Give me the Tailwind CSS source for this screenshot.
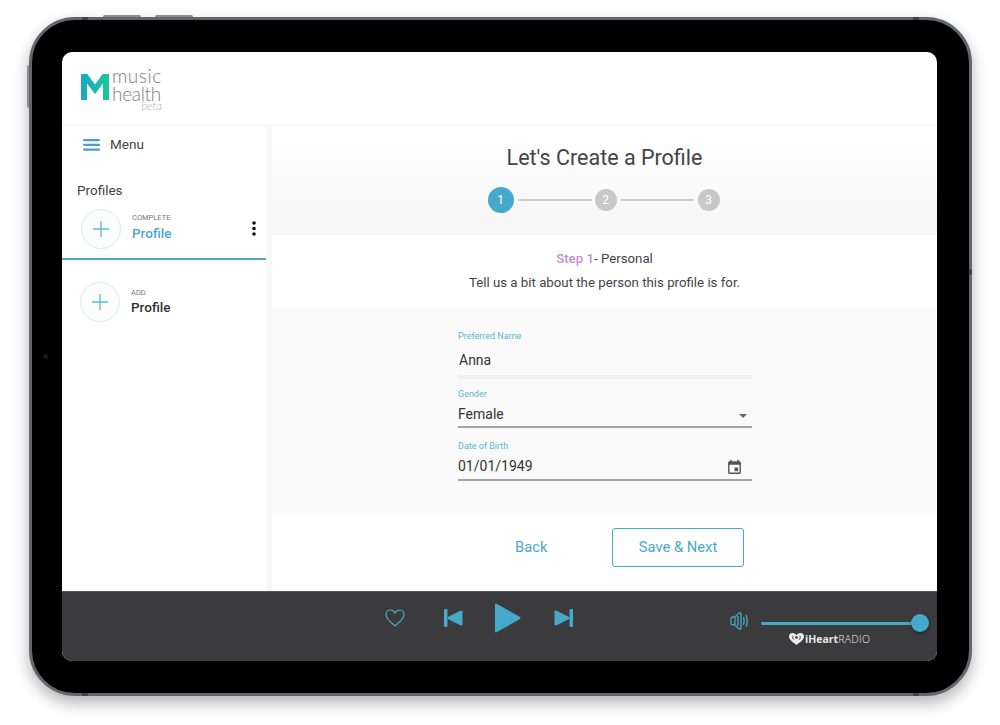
<!DOCTYPE html>
<html lang="en">
<head>
  <meta charset="UTF-8">
  <title>Music Health - Create Profile</title>
  <script src="https://cdn.jsdelivr.net/npm/@tailwindcss/browser@4"></script>
</head>
<body class="bg-white h-[725px] w-[1000px] overflow-hidden font-['Roboto',sans-serif]">
  <div class="pl-[29px] pt-[17px]">
    <!-- Tablet frame -->
    <div class="relative w-[943px] h-[679px] rounded-[46px] bg-black border-[3px] border-[#62676a] px-[30px] pt-[32px] shadow-[0_7px_16px_rgba(0,0,0,0.3)]">
      <div class="absolute -top-[5px] left-[71px] w-[38px] h-[2px] rounded-t-sm bg-[#8b8f91]"></div>
      <div class="absolute -top-[5px] left-[123px] w-[38px] h-[2px] rounded-t-sm bg-[#8b8f91]"></div>
      <div class="absolute top-[45px] -left-[5px] w-[2px] h-[43px] rounded-l-sm bg-[#8b8f91]"></div>
      <div class="absolute -top-[3px] left-[50px] w-[6px] h-[3px] bg-[#3f4345]"></div>
      <div class="absolute -top-[3px] right-[50px] w-[6px] h-[3px] bg-[#3f4345]"></div>
      <div class="absolute -bottom-[3px] left-[50px] w-[6px] h-[3px] bg-[#3f4345]"></div>
      <div class="absolute -bottom-[3px] right-[50px] w-[6px] h-[3px] bg-[#3f4345]"></div>
      <div class="absolute top-[249px] -right-[3px] w-[3px] h-[6px] bg-[#3f4345]"></div>
      <div class="absolute top-[334px] left-[11px] w-[5px] h-[5px] rounded-full bg-[#161a20]"></div>

      <!-- Screen -->
      <div class="w-[875px] h-[609px] rounded-[10px] overflow-hidden bg-white flex flex-col">
        <header class="h-[75px] shrink-0 border-b-[3px] border-[#f8f8f8] pl-[19px] pt-[16px] flex items-start">
          <svg width="28" height="26" viewBox="0 0 29 26" class="mt-[6px]" preserveAspectRatio="none">
            <defs>
              <linearGradient id="logoGrad" x1="0" y1="0" x2="1" y2="0">
                <stop offset="0" stop-color="#1aa7c4"/>
                <stop offset="1" stop-color="#1cc79a"/>
              </linearGradient>
            </defs>
            <path d="M0 0H6.500L14.500 10.500L22.500 0H29V26H22.800V9.500L14.500 20L6.200 9.500V26H0Z" fill="url(#logoGrad)"/>
          </svg>
          <div class="ml-[3px] -mt-[1px] w-[50px] flex flex-col font-['Lato',sans-serif] text-[#7d7d80]">
            <span class="text-[19px] font-light leading-[17px] tracking-[0.55px]">music</span>
            <span class="text-[19px] font-light leading-[17px] -tracking-[0.3px] mt-[1px] whitespace-nowrap">health</span>
            <span class="text-[11.500px] font-light leading-[10px] -mt-[1px] italic text-[#b0b0b0] self-end">beta</span>
          </div>
        </header>

        <div class="flex-1 flex min-h-0">
          <!-- Sidebar -->
          <aside class="w-[204px] shrink-0 bg-white flex flex-col">
            <div class="flex items-center pl-[21px] pt-[5px] pb-[5px] h-[25px] box-content">
              <svg width="17" height="12" viewBox="0 0 17 12" fill="#4a9fd0">
                <rect width="17" height="2.200" rx="1"/>
                <rect y="4.800" width="17" height="2.200" rx="1"/>
                <rect y="9.600" width="17" height="2.200" rx="1"/>
              </svg>
              <span class="ml-[10px] text-[13.500px] text-[#444]">Menu</span>
            </div>
            <div class="pl-[15px] mt-[19px] text-[13.500px] leading-[18px] text-[#444]">Profiles</div>
            <div class="relative h-[60px] mt-[1px] border-b-2 border-[#4aa9c9] pl-[19px] pt-[9px] flex items-start">
              <div class="w-[40px] h-[40px] rounded-full bg-[#fbfdfd] border border-[#d9ebef] flex items-center justify-center">
                <svg width="16" height="16" viewBox="0 0 16 16" stroke="#5db8d2" stroke-width="1.300"><path d="M8 0V16M0 8H16"/></svg>
              </div>
              <div class="ml-[11px] flex flex-col">
                <span class="text-[7.500px] leading-[10px] mt-[4px] text-[#777]">COMPLETE</span>
                <span class="text-[13.500px] leading-[18px] mt-[1px] font-medium text-[#4aa9c9]">Profile</span>
              </div>
              <svg class="absolute right-[10px] top-[21px]" width="4" height="15" viewBox="0 0 4 15" fill="#111">
                <circle cx="2" cy="2" r="1.800"/><circle cx="2" cy="7.500" r="1.800"/><circle cx="2" cy="13" r="1.800"/>
              </svg>
            </div>
            <div class="pl-[18px] mt-[22px] flex items-start">
              <div class="w-[40px] h-[40px] rounded-full bg-[#fbfdfd] border border-[#d9ebef] flex items-center justify-center">
                <svg width="16" height="16" viewBox="0 0 16 16" stroke="#5db8d2" stroke-width="1.300"><path d="M8 0V16M0 8H16"/></svg>
              </div>
              <div class="ml-[11px] flex flex-col">
                <span class="text-[7.500px] leading-[10px] mt-[6px] text-[#777]">ADD</span>
                <span class="text-[13.500px] leading-[18px] font-medium text-[#333]">Profile</span>
              </div>
            </div>
          </aside>

          <div class="w-[6px] shrink-0 bg-[#f8f8f8]"></div>

          <!-- Main -->
          <main class="flex-1 flex flex-col min-w-0">
            <section class="h-[108px] shrink-0 bg-gradient-to-b from-white to-[#f6f6f6] flex flex-col items-center">
              <h1 class="mt-[16px] text-[21.500px] leading-[30px] text-[#444]">Let's Create a Profile</h1>
              <div class="mt-[14px] mr-[2px] flex items-center">
                <span class="w-[26px] h-[26px] rounded-full bg-[#46a9cb] text-white text-[12px] flex items-center justify-center">1</span>
                <span class="w-[74px] h-[2px] ml-[4px] mr-[3px] bg-[#cdcdcd]"></span>
                <span class="w-[22px] h-[22px] rounded-full bg-[#c8c8c8] text-white text-[12px] flex items-center justify-center">2</span>
                <span class="w-[73px] h-[2px] mx-[4px] bg-[#cdcdcd]"></span>
                <span class="w-[22px] h-[22px] rounded-full bg-[#c8c8c8] text-white text-[12px] flex items-center justify-center">3</span>
              </div>
            </section>

            <section class="h-[72px] shrink-0 bg-white flex flex-col items-center text-[13.250px] text-[#444] pt-[14px]">
              <p class="leading-[20px]"><span class="font-medium text-[#c78fd0]">Step 1</span>- Personal</p>
              <p class="leading-[20px] mt-[4px]">Tell us a bit about the person this profile is for.</p>
            </section>

            <section class="h-[206px] shrink-0 bg-[#fafafa] pl-[186px]">
              <div class="w-[294px]">
                <label class="block pt-[23px] text-[9px] leading-[12px] text-[#5cb6d3]">Preferred Name</label>
                <div class="mt-[8px] pl-[1px] pb-[5px] text-[14px] leading-[20px] text-[#333] border-b-[4px] border-[#f1f1f1]">Anna</div>
                <label class="block mt-[9px] text-[9px] leading-[12px] text-[#5cb6d3]">Gender</label>
                <div class="mt-[2px] h-[26px] flex items-center justify-between text-[14px] text-[#333] border-b-2 border-[#a3a3a3]">
                  <span>Female</span>
                  <svg class="mr-[5px] mt-[3px]" width="8" height="4" viewBox="0 0 8 4" fill="#666"><path d="M0 0H8L4 4Z"/></svg>
                </div>
                <label class="block mt-[12px] text-[9px] leading-[12px] text-[#5cb6d3]">Date of Birth</label>
                <div class="mt-[2px] h-[27px] flex items-center justify-between text-[14px] text-[#333] border-b-2 border-[#a3a3a3]">
                  <span>01/01/1949</span>
                  <svg class="mr-[10px] -mt-[1px]" width="15" height="15" viewBox="3 1 18 21" fill="#555"><path d="M19 4h-1V2h-2v2H8V2H6v2H5c-1.100 0-2 .9-2 2v14c0 1.100.9 2 2 2h14c1.100 0 2-.9 2-2V6c0-1.100-.9-2-2-2zm0 16H5V9h14v11z"/><rect x="12" y="13" width="5" height="5"/></svg>
                </div>
              </div>
            </section>

            <section class="flex-1 bg-white flex items-start pl-[243px] pt-[15px]">
              <span class="w-[32px] mt-[10px] text-[14.750px] leading-[19px] text-[#4aa9c9] whitespace-nowrap">Back</span>
              <button class="ml-[65px] w-[132px] h-[39px] rounded-[3px] border border-[#4aa9c9] text-[14.750px] text-[#4aa9c9]">Save &amp; Next</button>
            </section>
          </main>
        </div>

        <!-- Player -->
        <footer class="relative h-[70px] shrink-0 bg-[#3b3b3d] border-t border-[#555] flex">
          <div class="w-[323px] shrink-0"></div>
          <div class="flex items-start pt-[11px]">
            <svg class="mt-[6px]" width="20" height="18" viewBox="0 0 20 18" fill="none" stroke="#46a9cb" stroke-width="1.200"><path d="M10 17C6 13.500 1 10 1 5.500C1 2.800 3 1 5.300 1C7.200 1 9 2 10 4C11 2 12.800 1 14.700 1C17 1 19 2.800 19 5.500C19 10 14 13.500 10 17Z"/></svg>
            <svg class="ml-[39px] mt-[6px]" width="19" height="18" viewBox="0 0 19 18" fill="#46a9cb"><rect x="0" y="0" width="3.500" height="18" rx="1"/><path d="M5 9L17 3V15Z" stroke="#46a9cb" stroke-width="3" stroke-linejoin="round"/></svg>
            <svg class="ml-[32px]" width="26" height="30" viewBox="0 0 26 30" fill="#46a9cb"><path d="M0 1.500Q0 0 1.500 .7L25 14Q26 15 25 16L1.500 29.300Q0 30 0 28.500Z"/></svg>
            <svg class="ml-[33px] mt-[6px]" width="19" height="18" viewBox="0 0 19 18" fill="#46a9cb"><rect x="15.500" y="0" width="3.500" height="18" rx="1"/><path d="M14 9L2 3V15Z" stroke="#46a9cb" stroke-width="3" stroke-linejoin="round"/></svg>
          </div>
          <svg class="absolute left-[668px] top-[19px]" width="19" height="20" viewBox="0 0 19 20" fill="none" stroke="#46a9cb" stroke-width="1.300">
            <rect x="1" y="6" width="4" height="8" rx="2"/><path d="M5 6L9 2Q11 1 11 4V16Q11 19 9 18L5 14"/><path d="M8 5V15"/><path d="M13.500 6Q15 10 13.500 14"/><path d="M16 4Q18.500 10 16 16"/>
          </svg>
          <div class="absolute left-[699px] top-[30px] w-[160px] h-[3px] rounded-full bg-[#46a9cb]"></div>
          <div class="absolute left-[849px] top-[22px] w-[18px] h-[18px] rounded-full bg-[#46a9cb] shadow-[0_1px_3px_rgba(0,0,0,0.5)]"></div>
          <div class="absolute left-[727px] top-[40px] flex items-center font-['Open_Sans',sans-serif] text-[#e8e8e8] leading-[14px]">
            <svg width="15" height="12" viewBox="0 0 15 12" fill="#ececec"><path d="M7.500 12C4.500 9.500 0 7 0 3.500C0 1.500 1.500 0 3.500 0C5.200 0 6.600 .9 7.500 2.200C8.400 .9 9.800 0 11.500 0C13.500 0 15 1.500 15 3.500C15 7 10.500 9.500 7.500 12Z"/><circle cx="7.500" cy="4.500" r="1.300" fill="#3b3b3d"/><path d="M4.200 2.800Q3 4.500 4.500 6.500M10.800 2.800Q12 4.500 10.500 6.500" stroke="#3b3b3d" fill="none"/></svg>
            <span class="ml-[1px] text-[10.500px] font-bold">iHeart</span><span class="text-[10.500px] font-light tracking-[0.3px]">RADIO</span>
          </div>
        </footer>
      </div>
    </div>
  </div>
</body>
</html>
